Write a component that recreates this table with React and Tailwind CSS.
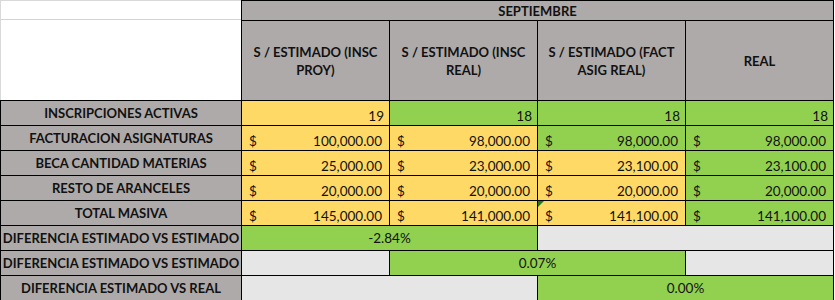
const GRAY = 'bg-[#aeaaaa]';
const YEL = 'bg-[#ffd966]';
const GRN = 'bg-[#92d050]';
const LIGHT = 'bg-[#e7e6e6]';

const rows = [
  {
    label: 'INSCRIPCIONES ACTIVAS',
    cells: [
      { v: '19', c: YEL },
      { v: '18', c: GRN },
      { v: '18', c: GRN },
      { v: '18', c: GRN },
    ],
  },
  {
    label: 'FACTURACION ASIGNATURAS',
    cells: [
      { v: '100,000.00', c: YEL, money: true },
      { v: '98,000.00', c: YEL, money: true },
      { v: '98,000.00', c: GRN, money: true },
      { v: '98,000.00', c: GRN, money: true },
    ],
  },
  {
    label: 'BECA CANTIDAD MATERIAS',
    cells: [
      { v: '25,000.00', c: YEL, money: true },
      { v: '23,000.00', c: YEL, money: true },
      { v: '23,100.00', c: YEL, money: true },
      { v: '23,100.00', c: GRN, money: true },
    ],
  },
  {
    label: 'RESTO DE ARANCELES',
    cells: [
      { v: '20,000.00', c: YEL, money: true },
      { v: '20,000.00', c: YEL, money: true },
      { v: '20,000.00', c: YEL, money: true },
      { v: '20,000.00', c: GRN, money: true },
    ],
  },
  {
    label: 'TOTAL MASIVA',
    cells: [
      { v: '145,000.00', c: YEL, money: true },
      { v: '141,000.00', c: YEL, money: true },
      { v: '141,100.00', c: YEL, money: true, flag: true },
      { v: '141,100.00', c: GRN, money: true },
    ],
  },
];

const diffs = [
  {
    label: 'DIFERENCIA ESTIMADO VS ESTIMADO',
    parts: [
      { span: 'col-span-2', c: GRN, v: '-2.84%' },
      { span: 'col-span-2', c: LIGHT, last: true },
    ],
  },
  {
    label: 'DIFERENCIA ESTIMADO VS ESTIMADO',
    parts: [
      { span: 'col-span-1', c: LIGHT },
      { span: 'col-span-2', c: GRN, v: '0.07%' },
      { span: 'col-span-1', c: LIGHT, last: true },
    ],
  },
  {
    label: 'DIFERENCIA ESTIMADO VS REAL',
    parts: [
      { span: 'col-span-2', c: LIGHT },
      { span: 'col-span-2', c: GRN, v: '0.00%', last: true },
    ],
  },
];

const headers = [
  ['S / ESTIMADO (INSC', 'PROY)'],
  ['S / ESTIMADO (INSC', 'REAL)'],
  ['S / ESTIMADO (FACT', 'ASIG REAL)'],
  ['REAL'],
];

function Label({ children }) {
  return (
    <div className={`${GRAY} border-l border-t border-black flex items-center justify-center font-bold text-[13px] whitespace-nowrap`}>
      {children}
    </div>
  );
}

export default function App() {
  return (
    <div
      className="w-[835px] h-[300px] overflow-hidden bg-white text-[#111] text-[13.5px] leading-[18px]"
      style={{ fontFamily: 'Lato, "Open Sans", sans-serif' }}
    >
      <div className="grid grid-cols-[241px_148px_148px_148px_149px] grid-rows-[20px_80px_repeat(8,25px)]">
        {/* empty corner, sheet gridlines only */}
        <div className="row-span-2 flex flex-col">
          <div className="h-[20px] border-t border-b border-l border-[#d9d9d9] border-b-[#d4d4d4]" />
          <div className="flex-1 border-l border-[#d9d9d9]" />
        </div>
        <div className={`col-span-4 ${GRAY} border-l border-t border-r border-black flex items-center justify-center font-bold text-[13px]`}>
          SEPTIEMBRE
        </div>
        {headers.map((lines, i) => (
          <div
            key={i}
            className={`${GRAY} border-l border-t border-black flex flex-col items-center justify-center font-bold text-[13px] ${i === 3 ? 'border-r' : ''}`}
          >
            {lines.map((l) => (
              <span key={l}>{l}</span>
            ))}
          </div>
        ))}

        {rows.map((r) => (
          <>
            <Label key={r.label}>{r.label}</Label>
            {r.cells.map((cell, j) => (
              <div
                key={r.label + j}
                className={`${cell.c} relative border-l border-t border-black flex items-end ${cell.money ? 'justify-between pl-[7px] pr-[7px]' : 'justify-end pr-[5px]'} ${j === 3 ? 'border-r' : ''}`}
              >
                {cell.flag && (
                  <span className="absolute left-0 top-0 w-0 h-0 border-t-[6px] border-r-[6px] border-t-[#1e7a1e] border-r-transparent" />
                )}
                {cell.money && <span>$</span>}
                <span>{cell.v}</span>
              </div>
            ))}
          </>
        ))}

        {diffs.map((d, i) => (
          <>
            <Label key={'d' + i}>{d.label}</Label>
            {d.parts.map((p, j) => (
              <div
                key={'d' + i + j}
                className={`${p.span} ${p.c} border-l border-t border-black flex items-center justify-center ${p.last ? 'border-r' : ''}`}
              >
                {p.v}
              </div>
            ))}
          </>
        ))}
      </div>
    </div>
  );
}
